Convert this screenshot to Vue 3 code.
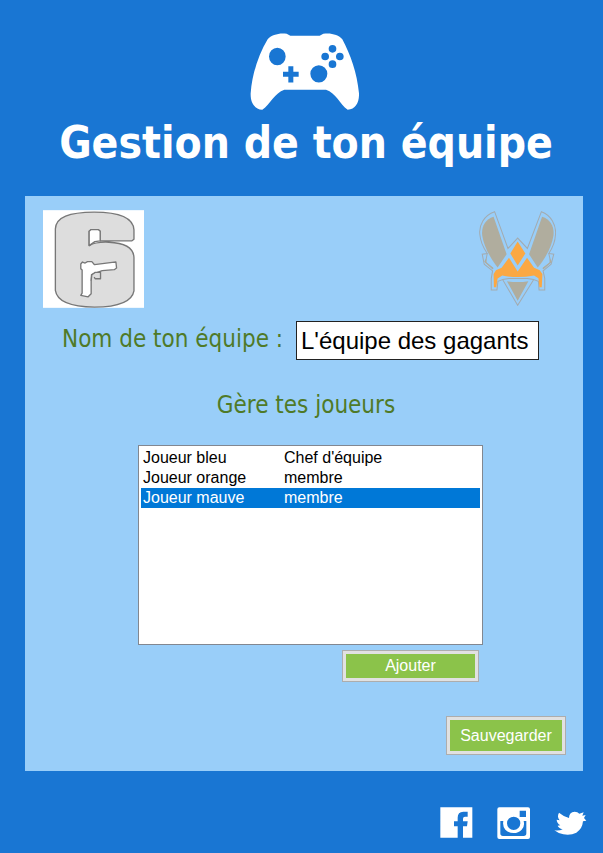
<script setup>
import { ref } from 'vue'

const teamName = ref("L'équipe des gagants")
const players = [
  { name: 'Joueur bleu', role: "Chef d'équipe" },
  { name: 'Joueur orange', role: 'membre' },
  { name: 'Joueur mauve', role: 'membre' },
]
const selected = ref(2)
</script>

<template>
  <div class="page">
    <header class="header">
      <svg class="pad" viewBox="30 25 327 230" aria-hidden="true">
        <path
          fill="#fff"
          fill-rule="evenodd"
          d="M83 43 C94 30 120 23 140 27 L151 33 H239 L250 27 C272 23 296 30 307 43 C332 90 351 143 357 205 C358 232 348 253 323 255 C299 238 288 205 258 195 H133 C104 205 91 238 67 255 C41 252 31 232 32 205 C36 148 56 88 83 43 Z
          M87 95 a25 26 0 1 0 50 0 a25 26 0 1 0 -50 0 Z
          M211 147 a25.500 26 0 1 0 51 0 a25.500 26 0 1 0 -51 0 Z
          M266 72 a11.500 11.500 0 1 0 23 0 a11.500 11.500 0 1 0 -23 0 Z
          M266 118 a11.500 11.500 0 1 0 23 0 a11.500 11.500 0 1 0 -23 0 Z
          M244 95 a11.500 11.500 0 1 0 23 0 a11.500 11.500 0 1 0 -23 0 Z
          M288 95 a11.500 11.500 0 1 0 23 0 a11.500 11.500 0 1 0 -23 0 Z
          M145 124 H160 V141 H176 V156 H160 V173 H145 V156 H129 V141 H145 Z"
        />
      </svg>
      <h1>Gestion de ton équipe</h1>
    </header>

    <main class="panel">
      <div class="logos">
        <svg class="game" viewBox="25 32 302 292" role="img" aria-label="Jeu">
          <rect x="25" y="32" width="302" height="292" fill="#fff" />
          <g stroke="#777" stroke-width="4" stroke-linejoin="round">
            <path
              fill="#ddd"
              d="M62 88 C64 52 103 39 178 38 C258 38 295 55 297 91 V119 L290 124 H196 V95 L190 90 H169 L163 95 V138 C180 128 199 127 222 128 C268 130 296 145 297 174 V273 C291 308 246 321 179 322 C110 321 67 307 62 272 Z"
            />
            <path
              fill="#fff"
              d="M138 193 L143 187 L151 190 L158 186 H171 L179 195 L232 188 L243 187 L245 205 L238 210 L202 213 L170 225 L169 244 V282 L160 291 L138 287 L142 280 V211 L138 207 Z"
            />
            <path fill="#ddd" d="M169 243 L171 225 L181 218 H197 V237 H181 L178 232" />
            <path fill="#fff" d="M163 138 V95 L169 90 H190 L196 95 V124 L180 126 Z" />
          </g>
        </svg>
        <svg class="team" viewBox="40 34 232 287" role="img" aria-label="Équipe">
          <g fill="none" stroke="#a3abb0" stroke-width="3">
            <path
              d="M89 39 C58 49 41 80 45 108 C47 132 57 149 67 164 L52 166 L58 196 L83 216 L79 239 V273 H96 L99 247 L113 242 L158 319 L206 242 L220 247 L222 273 H239 V239 L234 216 L258 196 L266 166 L251 164 C264 145 270 128 271 108 C274 80 258 49 229 39 L187 149 L158 118 L129 149 Z"
            />
            <path d="M67 164 L62 190 L85 209 M251 164 L257 190 L233 209 M113 242 L132 239 H187 L206 242" />
          </g>
          <g fill="#b0ad9e">
            <path d="M86 54 C60 62 49 85 52 110 C57 145 79 181 98 206 L125 166 Z" />
            <path d="M231 54 C257 62 268 85 265 110 C260 145 239 181 218 206 L192 166 Z" />
            <path d="M126 247 Q158 252 190 247 L158 305 Z" />
            <path d="M64 178 L58 188 L83 212 L85 207 L65 192 Z M254 178 L260 188 L235 212 L233 207 L253 192 Z" />
          </g>
          <g fill="#fba843">
            <path d="M158 128 L181 164 L158 200 L136 164 Z" />
            <path d="M132 177 L158 218 L186 177 L207 207 L224 214 L232 225 L230 265 H223 L220 238 L207 230 Q158 239 112 230 L98 239 L94 265 H87 L86 225 L93 214 L110 207 Z" />
          </g>
        </svg>
      </div>

      <div class="field">
        <label for="team-name">Nom de ton équipe :</label>
        <input id="team-name" v-model="teamName" type="text" />
      </div>

      <h2>Gère tes joueurs</h2>

      <div class="roster">
        <div class="list">
          <table aria-label="Joueurs">
            <tbody>
              <tr
                v-for="(player, i) in players"
                :key="player.name"
                :class="{ selected: i === selected }"
                @click="selected = i"
              >
                <td class="name">{{ player.name }}</td>
                <td>{{ player.role }}</td>
              </tr>
            </tbody>
          </table>
        </div>
        <button type="button" class="btn add">Ajouter</button>
      </div>

      <button type="button" class="btn save">Sauvegarder</button>
    </main>

    <footer class="social">
      <a href="#facebook" aria-label="Facebook">
        <svg viewBox="28 33 99 99" aria-hidden="true">
          <path fill="#fff" d="M29 34 H125 V125 H97 V91 H109 L111 76 H97 V68 Q97 62 103 62 H111 V47 H98 Q81 47 81 65 V76 H70 V91 H81 V125 H29 Z" />
        </svg>
      </a>
      <a href="#instagram" aria-label="Instagram">
        <svg viewBox="200 33 99 99" aria-hidden="true">
          <path
            fill="#fff"
            fill-rule="evenodd"
            d="M207 34 H293 Q299 34 299 40 V123 Q299 129 293 129 H207 Q201 129 201 123 V40 Q201 34 207 34 Z M268 44 V63 H287 V44 Z M210 75 V112 Q210 120 218 120 H280 Q288 120 288 112 V75 H280 Q284 91 274 101 Q264 111 250 111 Q235 111 225 101 Q216 91 219 75 Z M230 82 a20 20 0 1 0 40 0 a20 20 0 1 0 -40 0 Z"
          />
        </svg>
      </a>
      <a href="#twitter" aria-label="Twitter">
        <svg viewBox="371 33 99 99" aria-hidden="true">
          <path
            fill="#fff"
            d="M386 50 Q399 61 416 66 Q416 48 433 47 Q442 47 447 53 L460 49 L456 59 L466 57 L461 66 L468 74 L458 76 Q456 99 438 110 Q421 119 399 115 Q383 112 372 103 Q387 105 397 100 Q384 96 382 89 L390 88 Q379 81 379 71 L388 73 Q379 62 386 50 Z"
          />
        </svg>
      </a>
    </footer>
  </div>
</template>

<style>
body {
  margin: 0;
  background: #1976d3;
}
</style>

<style scoped>
.page {
  box-sizing: border-box;
  min-height: 100vh;
  padding: 33px 20px 13px 25px;
  background: #1976d3;
  font-family: "Liberation Sans", Arial, sans-serif;
}

.header {
  display: flex;
  flex-direction: column;
  align-items: center;
  padding-bottom: 27px;
}

.pad {
  width: 109px;
  height: 77px;
}

h1 {
  margin: 6px 0 0;
  padding-left: 4px;
  color: #fff;
  font: bold 44px/53px "DejaVu Sans Condensed", "DejaVu Sans", sans-serif;
  white-space: nowrap;
}

.panel {
  display: flex;
  flex-direction: column;
  padding: 14px 0 16px;
  background: #99cef9;
}

.logos {
  display: flex;
  justify-content: space-between;
  padding: 0 27px 0 18px;
}

.game {
  width: 101px;
  height: 98px;
}

.team {
  width: 78px;
  height: 96px;
}

.field {
  display: flex;
  align-items: flex-start;
  justify-content: space-between;
  margin-top: 13px;
  padding: 0 44px 0 37px;
}

label,
h2 {
  margin: 0;
  color: #4f7a28;
  font: 24px/36px "DejaVu Sans Condensed", "DejaVu Sans", sans-serif;
  white-space: nowrap;
}

input {
  box-sizing: border-box;
  width: 243px;
  height: 39px;
  padding: 0 4px;
  border: 1px solid #222;
  border-radius: 0;
  background: #fff;
  color: #000;
  font: 24px "Liberation Sans", Arial, sans-serif;
}

h2 {
  margin-top: 27px;
  padding-left: 4px;
  text-align: center;
}

.roster {
  display: flex;
  flex-direction: column;
  margin: 22px 100px 0 113px;
}

.list {
  box-sizing: border-box;
  height: 200px;
  padding: 2px;
  border: 1px solid #828790;
  background: #fff;
}

table {
  width: 100%;
  border-collapse: collapse;
  font-size: 16px;
  line-height: 20px;
}

td {
  padding: 0 0 0 2px;
}

.name {
  width: 139px;
}

.selected {
  background: #0078d7;
  color: #fff;
}

.btn {
  box-sizing: border-box;
  padding: 0;
  border: 1px solid #adadad;
  border-radius: 0;
  background: #8bc34a;
  box-shadow: inset 0 0 0 3px #e1e1e1;
  color: #fff;
  font: 16px "Liberation Sans", Arial, sans-serif;
}

.add {
  align-self: flex-end;
  width: 137px;
  height: 32px;
  margin: 5px 4px 0 0;
}

.save {
  align-self: flex-end;
  width: 120px;
  height: 39px;
  margin: 34px 17px 0 0;
}

.social {
  display: flex;
  justify-content: flex-end;
  gap: 24px;
  margin-right: -4px;
  padding-top: 36px;
}

.social a,
.social svg {
  display: block;
  width: 33px;
  height: 33px;
}
</style>
